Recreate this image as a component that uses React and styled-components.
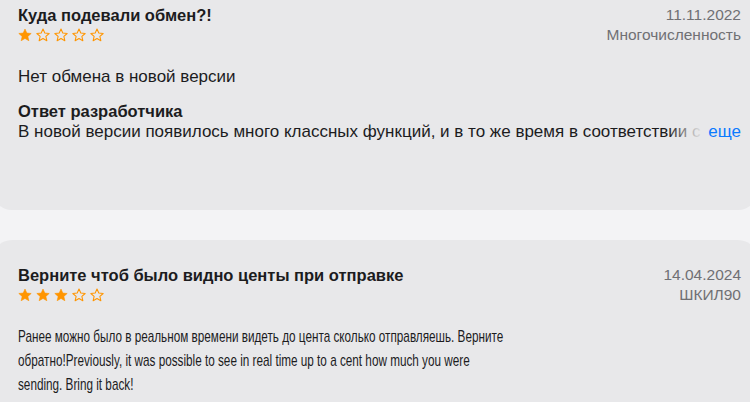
import React from 'react';
import styled, { createGlobalStyle } from 'styled-components';

const GlobalStyle = createGlobalStyle`
  html, body {
    margin: 0;
    padding: 0;
    background: #f3f3f5;
    overflow: hidden;
  }
  body {
    font-family: "Liberation Sans", Arial, sans-serif;
    -webkit-font-smoothing: antialiased;
  }
`;

const Page = styled.div`
  width: 750px;
  height: 402px;
  overflow: hidden;
`;

const List = styled.div`
  display: flex;
  flex-direction: column;
  gap: 30px;
  margin: -20px -8px 0;
`;

const Card = styled.div`
  background: #e8e8ea;
  border-radius: 20px;
  padding: 25px 17px 0 26px;
  height: ${(p) => p.$height}px;
  box-sizing: border-box;
`;

const Header = styled.div`
  display: flex;
  justify-content: space-between;
  align-items: flex-start;
`;

const Left = styled.div`
  display: flex;
  flex-direction: column;
  gap: 3px;
`;

const Title = styled.div`
  font-size: 16.5px;
  font-weight: 700;
  line-height: 20px;
  color: #1c1c1e;
`;

const Stars = styled.div`
  display: flex;
  gap: 4px;
`;

const Meta = styled.div`
  display: flex;
  flex-direction: column;
  align-items: flex-end;
  font-size: 15.5px;
  line-height: 20px;
  color: #707074;
`;

const Body = styled.div`
  margin-top: 20px;
  font-size: 17px;
  line-height: 24px;
  color: #1c1c1e;
`;

/* the review text in the reference is drawn horizontally condensed */
const NarrowBody = styled(Body)`
  width: 718px;
  transform: scaleX(0.69);
  transform-origin: left top;
`;

const ReplyTitle = styled.div`
  margin-top: 12px;
  font-size: 16.5px;
  font-weight: 700;
  line-height: 20px;
  color: #1c1c1e;
`;

const ReplyLine = styled.div`
  position: relative;
  font-size: 17px;
  line-height: 22px;
  color: #1c1c1e;
  white-space: nowrap;
  overflow: hidden;
`;

const More = styled.span`
  position: absolute;
  right: 0;
  top: 0;
  padding-left: 40px;
  color: #0a7aff;
  background: linear-gradient(to right, rgba(232, 232, 234, 0), rgba(232, 232, 234, 0.85) 28px, #e8e8ea 38px);
`;

const Star = ({ filled }) => (
  <svg width="14" height="14" viewBox="0 0 24 24">
    <path
      d="M12 1.8l3.1 6.9 7.5.7-5.7 5 1.7 7.4L12 17.9l-6.6 3.9 1.7-7.4-5.7-5 7.5-.7z"
      fill={filled ? '#ff9500' : 'none'}
      stroke="#ff9500"
      strokeWidth={filled ? 1 : 1.8}
      strokeLinejoin="round"
    />
  </svg>
);

const Rating = ({ value }) => (
  <Stars>
    {[1, 2, 3, 4, 5].map((i) => (
      <Star key={i} filled={i <= value} />
    ))}
  </Stars>
);

const App = () => {
  return (
    <Page>
      <GlobalStyle />
      <List>
        <Card $height={230}>
          <Header>
            <Left>
              <Title>Куда подевали обмен?!</Title>
              <Rating value={1} />
            </Left>
            <Meta>
              <span>11.11.2022</span>
              <span>Многочисленность</span>
            </Meta>
          </Header>
          <Body>Нет обмена в новой версии</Body>
          <ReplyTitle>Ответ разработчика</ReplyTitle>
          <ReplyLine>
            В новой версии появилось много классных функций, и в то же время в соответствии с требованиями
            <More>еще</More>
          </ReplyLine>
        </Card>
        <Card $height={200}>
          <Header>
            <Left>
              <Title>Верните чтоб было видно центы при отправке</Title>
              <Rating value={3} />
            </Left>
            <Meta>
              <span>14.04.2024</span>
              <span>ШКИЛ90</span>
            </Meta>
          </Header>
          <NarrowBody>
            Ранее можно было в реальном времени видеть до цента сколько отправляешь. Верните обратно!Previously, it was possible to see in real time up to a cent how much you were sending. Bring it back!
          </NarrowBody>
        </Card>
      </List>
    </Page>
  );
};

export default App;
